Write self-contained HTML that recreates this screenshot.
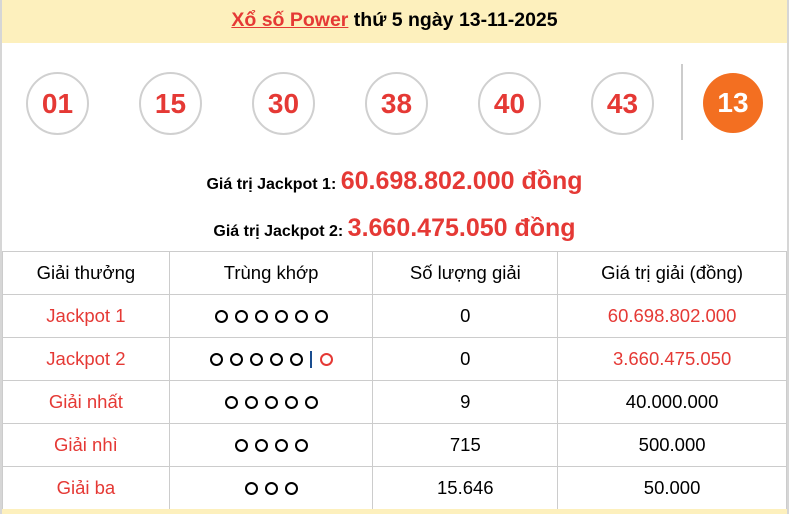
<!DOCTYPE html>
<html><head><meta charset="utf-8"><style>
*{margin:0;padding:0;box-sizing:border-box}
body{width:789px;height:514px;background:#fff;font-family:"Liberation Sans",Arial,sans-serif;position:relative;overflow:hidden}
.lb{position:absolute;left:0;top:0;width:2px;height:514px;background:#d6d6d6}
.rb{position:absolute;left:787px;top:0;width:2px;height:514px;background:#d6d6d6}
.hdr{position:absolute;left:2px;top:0;width:785px;height:43px;background:#fdf0bd;text-align:center;font-weight:bold;font-size:19.5px;line-height:41px;color:#000}
.hdr a{color:#e53935;text-decoration:underline}
.ball{position:absolute;top:72px;width:63px;height:63px;border:2px solid #d0d0d0;border-radius:50%;text-align:center;line-height:59px;color:#e53935;font-weight:bold;font-size:28px}
.orange{position:absolute;left:703px;top:73px;width:60px;height:60px;border-radius:50%;background:#f36f21;color:#fff;text-align:center;line-height:60px;font-weight:bold;font-size:28px}
.div{position:absolute;left:681px;top:64px;width:2px;height:76px;background:#ccc}
.jp{position:absolute;left:0;width:789px;text-align:center;font-weight:bold;font-size:16px;color:#000}
.jp span{color:#e53935;font-size:25px}
table{position:absolute;left:2px;top:251px;width:785px;border-collapse:collapse;font-size:18.5px}
td{border:1px solid #ccc;height:43px;text-align:center;padding:0}
.r{color:#e53935}
.foot{position:absolute;left:2px;top:509px;width:785px;height:5px;background:#fdf0bd}
i{display:inline-block;width:13px;height:13px;border:2px solid #000;border-radius:50%;margin:0 3.5px;vertical-align:-1px}
i.red{border-color:#e53935}
b.bar{display:inline-block;width:2px;height:17px;background:#1a4d8f;margin:0 4px;vertical-align:-3px}
</style></head><body>
<div class="lb"></div><div class="rb"></div>
<div class="hdr"><a>Xổ số Power</a> thứ 5 ngày 13-11-2025</div>
<div class="ball" style="left:26px">01</div>
<div class="ball" style="left:139px">15</div>
<div class="ball" style="left:252px">30</div>
<div class="ball" style="left:365px">38</div>
<div class="ball" style="left:478px">40</div>
<div class="ball" style="left:591px">43</div>
<div class="div"></div>
<div class="orange">13</div>
<div class="jp" style="top:167px">Giá trị Jackpot 1: <span>60.698.802.000 đồng</span></div>
<div class="jp" style="top:214px">Giá trị Jackpot 2: <span>3.660.475.050 đồng</span></div>
<table>
<colgroup><col style="width:167px"><col style="width:204px"><col style="width:185px"><col style="width:229px"></colgroup>
<tr><td>Giải thưởng</td><td>Trùng khớp</td><td>Số lượng giải</td><td>Giá trị giải (đồng)</td></tr>
<tr><td class="r">Jackpot 1</td><td><i></i><i></i><i></i><i></i><i></i><i></i></td><td>0</td><td class="r">60.698.802.000</td></tr>
<tr><td class="r">Jackpot 2</td><td><i></i><i></i><i></i><i></i><i></i><b class="bar"></b><i class="red"></i></td><td>0</td><td class="r">3.660.475.050</td></tr>
<tr><td class="r">Giải nhất</td><td><i></i><i></i><i></i><i></i><i></i></td><td>9</td><td>40.000.000</td></tr>
<tr><td class="r">Giải nhì</td><td><i></i><i></i><i></i><i></i></td><td>715</td><td>500.000</td></tr>
<tr><td class="r">Giải ba</td><td><i></i><i></i><i></i></td><td>15.646</td><td>50.000</td></tr>
</table>
<div class="foot"></div>
</body></html>
